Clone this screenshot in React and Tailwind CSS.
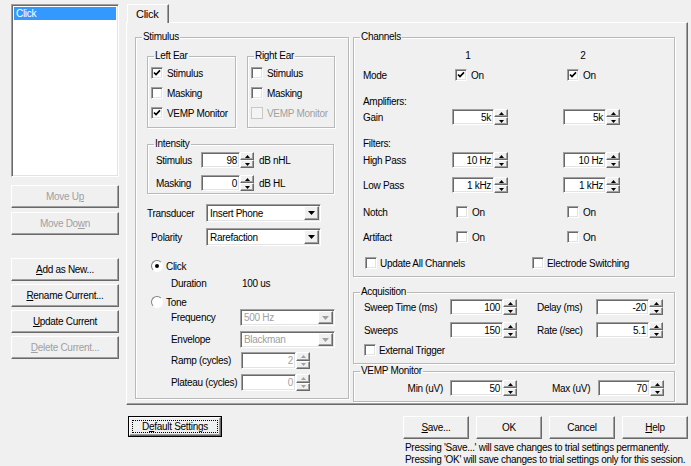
import React from "react";

// classic win32 bevels
const raised =
  "bg-[#f0f0f0] border border-t-white border-l-white border-r-[#696969] border-b-[#696969] shadow-[inset_-1px_-1px_0_#a0a0a0]";
const sunken =
  "border border-t-[#a0a0a0] border-l-[#a0a0a0] border-r-white border-b-white shadow-[inset_1px_1px_0_#696969,inset_-1px_-1px_0_#e3e3e3]";

const Btn = ({ children, className = "", disabled }) => (
  <button
    type="button"
    className={`flex items-center justify-center h-[23px] ${raised} ${
      disabled ? "text-[#a0a0a0]" : "text-black"
    } ${className}`}
  >
    {children}
  </button>
);

const Check = ({ checked, disabled }) => (
  <span
    className={`inline-flex shrink-0 items-center justify-center w-[12px] h-[12px] ${
      disabled
        ? "bg-[#f4f4f4] border border-[#c8c8c8]"
        : `bg-white ${sunken}`
    }`}
  >
    {checked && (
      <svg width="8" height="8" viewBox="0 0 8 8">
        <path d="M1 3.5L3 5.6L7 1.4" stroke="#000" strokeWidth="1.7" fill="none" />
      </svg>
    )}
  </span>
);

const Radio = ({ checked }) => (
  <span className="inline-flex shrink-0 items-center justify-center w-[12px] h-[12px] rounded-full bg-white border border-t-[#808080] border-l-[#808080] border-r-white border-b-white">
    {checked && <span className="w-[4px] h-[4px] rounded-full bg-black" />}
  </span>
);

const Arrow = ({ up, disabled }) => (
  <svg width="5" height="3" viewBox="0 0 5 3">
    <path d={up ? "M2.5 0L5 3H0z" : "M0 0H5L2.5 3z"} fill={disabled ? "#a0a0a0" : "#000"} />
  </svg>
);

const SpinBox = ({ value, w, disabled, className = "" }) => (
  <div className={`flex h-[16px] ${className}`}>
    <div
      className={`flex items-center justify-end pr-[2px] bg-white ${sunken} ${w} ${
        disabled ? "text-[#a0a0a0]" : "text-black"
      }`}
    >
      {value}
    </div>
    <div className="flex flex-col w-[14px] h-full">
      <div className={`flex-1 flex items-center justify-center ${raised}`}>
        <Arrow up disabled={disabled} />
      </div>
      <div className={`flex-1 flex items-center justify-center ${raised}`}>
        <Arrow disabled={disabled} />
      </div>
    </div>
  </div>
);

const Select = ({ value, className = "", disabled }) => (
  <div className={`flex items-center bg-white ${sunken} ${className}`}>
    <span className={`flex-1 pl-[3px] ${disabled ? "text-[#a0a0a0]" : "text-black"}`}>
      {value}
    </span>
    <div className={`w-[15px] h-[calc(100%-2px)] mr-[1px] flex items-center justify-center ${raised}`}>
      <svg width="7" height="4" viewBox="0 0 7 4">
        <path d="M0 0H7L3.5 4z" fill={disabled ? "#a0a0a0" : "#000"} />
      </svg>
    </div>
  </div>
);

const Group = ({ title, className = "", children }) => (
  <fieldset
    className={`border border-[#b9b9b9] shadow-[1px_1px_0_#fff,inset_1px_1px_0_#fff] ${className}`}
  >
    <legend className="ml-[6px] px-[1px] leading-[12px]">{title}</legend>
    {children}
  </fieldset>
);

const CheckRow = ({ label, checked, disabled }) => (
  <div className={`flex items-center h-[20px] gap-[4px] ${disabled ? "text-[#a0a0a0]" : ""}`}>
    <Check checked={checked} disabled={disabled} />
    <span>{label}</span>
  </div>
);

const ChanCheck = ({ checked, className }) => (
  <div className={`flex items-center gap-[4px] ${className}`}>
    <Check checked={checked} />
    <span>On</span>
  </div>
);

const App = () => {
  return (
    <div className="w-[691px] h-[466px] bg-[#f0f0f0] text-black text-[10px] tracking-[-0.3px] leading-[13px] whitespace-nowrap font-['Liberation_Sans',Arial,sans-serif] flex overflow-hidden select-none">
      {/* list + buttons */}
      <div className="flex flex-col w-[108px] ml-[11px] mt-[4px]">
        <div className={`h-[173px] bg-white ${sunken} p-[2px]`}>
          <div className="h-[13px] bg-[#3399ff] text-white pl-[2px] leading-[13px]">Click</div>
        </div>
        <Btn className="mt-[8px]" disabled>
          Move U<u>p</u>
        </Btn>
        <Btn className="mt-[4px]" disabled>
          Move Do<u>w</u>n
        </Btn>
        <Btn className="mt-[23px]">
          <u>A</u>dd as New...
        </Btn>
        <Btn className="mt-[3px]">
          <u>R</u>ename Current...
        </Btn>
        <Btn className="mt-[3px]">
          <u>U</u>pdate Current
        </Btn>
        <Btn className="mt-[3px]" disabled>
          <u>D</u>elete Current...
        </Btn>
      </div>

      {/* tab area */}
      <div className="flex flex-col w-[562px] ml-[7px] mt-[4px]">
        <div className="flex h-[18px]">
          <div className="relative z-10 ml-[1px] w-[42px] h-[19px] bg-[#f0f0f0] border-t border-l border-t-white border-l-white border-r border-r-[#696969] shadow-[inset_-1px_0_0_#a0a0a0] pl-[8px] pt-[3px] text-[11px]">
            Click
          </div>
        </div>
        <div className="flex items-start h-[383px] bg-[#f0f0f0] border border-t-white border-l-white border-r-[#696969] border-b-[#696969] shadow-[inset_-1px_-1px_0_#a0a0a0]">
          {/* Stimulus */}
          <Group title="Stimulus" className="ml-[8px] mt-[8px] w-[214px] h-[368px]">
            <div className="flex mt-[7px] ml-[11px] gap-[11px]">
              <Group title="Left Ear" className="w-[89px] h-[78px]">
                <div className="pt-[1px] pl-[3px]">
                  <CheckRow label="Stimulus" checked />
                  <CheckRow label="Masking" />
                  <CheckRow label="VEMP Monitor" checked />
                </div>
              </Group>
              <Group title="Right Ear" className="w-[88px] h-[78px]">
                <div className="pt-[1px] pl-[3px]">
                  <CheckRow label="Stimulus" />
                  <CheckRow label="Masking" />
                  <CheckRow label="VEMP Monitor" disabled />
                </div>
              </Group>
            </div>

            <Group title="Intensity" className="mt-[10px] ml-[11px] w-[187px] h-[56px]">
              <div className="flex items-center h-[18px] mt-[1px]">
                <span className="pl-[8px] w-[53px]">Stimulus</span>
                <SpinBox value="98" w="w-[39px]" />
                <span className="ml-[5px]">dB nHL</span>
              </div>
              <div className="flex items-center h-[18px] mt-[5px]">
                <span className="pl-[8px] w-[53px]">Masking</span>
                <SpinBox value="0" w="w-[39px]" />
                <span className="ml-[5px]">dB HL</span>
              </div>
            </Group>

            <div className="flex items-center h-[18px] mt-[10px]">
              <span className="ml-[11px] w-[59px]">Transducer</span>
              <Select value="Insert Phone" className="w-[115px] h-[18px]" />
            </div>
            <div className="flex items-center h-[18px] mt-[6px]">
              <span className="ml-[15px] w-[55px]">Polarity</span>
              <Select value="Rarefaction" className="w-[115px] h-[18px]" />
            </div>

            <div className="flex items-center h-[14px] mt-[13px] ml-[15px] gap-[3px]">
              <Radio checked />
              <span>Click</span>
            </div>
            <div className="flex items-center h-[14px] mt-[3px]">
              <span className="ml-[35px] w-[71px]">Duration</span>
              <span>100 us</span>
            </div>
            <div className="flex items-center h-[14px] mt-[5px] ml-[15px] gap-[3px]">
              <Radio />
              <span>Tone</span>
            </div>
            <div className="flex items-center h-[17px]">
              <span className="ml-[35px] w-[69px]">Frequency</span>
              <Select value="500 Hz" disabled className="w-[95px] h-[17px]" />
            </div>
            <div className="flex items-center h-[17px] mt-[5px]">
              <span className="ml-[35px] w-[69px]">Envelope</span>
              <Select value="Blackman" disabled className="w-[95px] h-[17px]" />
            </div>
            <div className="flex items-center h-[17px] mt-[4px]">
              <span className="ml-[35px] w-[70px]">Ramp (cycles)</span>
              <SpinBox value="2" w="w-[55px]" disabled className="h-[17px]" />
            </div>
            <div className="flex items-center h-[17px] mt-[5px]">
              <span className="ml-[35px] w-[70px]">Plateau (cycles)</span>
              <SpinBox value="0" w="w-[55px]" disabled className="h-[17px]" />
            </div>
          </Group>

          {/* right side */}
          <div className="flex flex-col ml-[4px] mt-[8px]">
            <Group title="Channels" className="w-[322px] h-[246px]">
              <div className="flex items-center h-[12px] mt-[6px]">
                <span className="w-[98px]" />
                <span className="w-[111px]">
                  <span className="inline-block w-[32px] text-center">1</span>
                </span>
                <span className="ml-[4px] w-[32px] text-center">2</span>
              </div>
              <div className="flex items-center h-[14px] mt-[7px]">
                <span className="w-[98px] pl-[9px]">Mode</span>
                <div className="w-[111px]">
                  <ChanCheck checked className="ml-[3px]" />
                </div>
                <ChanCheck checked className="ml-[4px]" />
              </div>
              <div className="flex items-center h-[12px] mt-[13px] pl-[9px]">Amplifiers:</div>
              <div className="flex items-center h-[16px] mt-[2px]">
                <span className="w-[98px] pl-[9px]">Gain</span>
                <div className="w-[111px]">
                  <SpinBox value="5k" w="w-[42px]" />
                </div>
                <SpinBox value="5k" w="w-[43px]" />
              </div>
              <div className="flex items-center h-[12px] mt-[12px] pl-[9px]">Filters:</div>
              <div className="flex items-center h-[16px] mt-[3px]">
                <span className="w-[98px] pl-[9px]">High Pass</span>
                <div className="w-[111px]">
                  <SpinBox value="10 Hz" w="w-[42px]" />
                </div>
                <SpinBox value="10 Hz" w="w-[43px]" />
              </div>
              <div className="flex items-center h-[16px] mt-[9px]">
                <span className="w-[98px] pl-[9px]">Low Pass</span>
                <div className="w-[111px]">
                  <SpinBox value="1 kHz" w="w-[42px]" />
                </div>
                <SpinBox value="1 kHz" w="w-[43px]" />
              </div>
              <div className="flex items-center h-[14px] mt-[12px]">
                <span className="w-[98px] pl-[9px]">Notch</span>
                <div className="w-[111px]">
                  <ChanCheck className="ml-[4px]" />
                </div>
                <ChanCheck className="ml-[4px]" />
              </div>
              <div className="flex items-center h-[14px] mt-[11px]">
                <span className="w-[98px] pl-[9px]">Artifact</span>
                <div className="w-[111px]">
                  <ChanCheck className="ml-[4px]" />
                </div>
                <ChanCheck className="ml-[4px]" />
              </div>
              <div className="flex items-center h-[14px] mt-[12px]">
                <div className="flex items-center w-[178px] pl-[11px] gap-[3px]">
                  <Check />
                  <span>Update All Channels</span>
                </div>
                <div className="flex items-center gap-[3px]">
                  <Check />
                  <span>Electrode Switching</span>
                </div>
              </div>
            </Group>

            <Group title="Acquisition" className="mt-[9px] w-[322px] h-[78px]">
              <div className="flex items-center h-[16px] mt-[1px]">
                <span className="w-[96px] pl-[10px]">Sweep Time (ms)</span>
                <SpinBox value="100" w="w-[53px]" />
                <span className="ml-[20px] w-[59px]">Delay (ms)</span>
                <SpinBox value="-20" w="w-[53px]" />
              </div>
              <div className="flex items-center h-[16px] mt-[7px]">
                <span className="w-[96px] pl-[10px]">Sweeps</span>
                <SpinBox value="150" w="w-[53px]" />
                <span className="ml-[20px] w-[59px]">Rate (/sec)</span>
                <SpinBox value="5.1" w="w-[53px]" />
              </div>
              <div className="flex items-center h-[14px] mt-[5px] ml-[10px] gap-[3px]">
                <Check />
                <span>External Trigger</span>
              </div>
            </Group>

            <Group title="VEMP Monitor" className="mt-[1px] w-[322px] h-[37px]">
              <div className="flex items-center h-[16px] mt-[3px]">
                <span className="w-[89px] text-right">Min (uV)</span>
                <SpinBox value="50" w="w-[53px]" className="ml-[7px]" />
                <span className="ml-[35px] w-[46px]">Max (uV)</span>
                <SpinBox value="70" w="w-[52px]" />
              </div>
            </Group>
          </div>
        </div>

        {/* bottom buttons */}
        <div className="flex items-start mt-[11px]">
          <div className="ml-[2px] w-[94px] h-[21px] border border-black">
            <div className={`h-full flex items-center justify-center ${raised} p-[2px]`}>
              <span className="w-full h-full flex items-center justify-center border border-dotted border-black">
                D<u>e</u>fault Settings
              </span>
            </div>
          </div>
          <div className="flex flex-col ml-[181px]">
            <div className="flex gap-[7px]">
              <Btn className="w-[66px] h-[21px]">
                <u>S</u>ave...
              </Btn>
              <Btn className="w-[66px] h-[21px]">OK</Btn>
              <Btn className="w-[66px] h-[21px]">Cancel</Btn>
              <Btn className="w-[66px] h-[21px]">
                <u>H</u>elp
              </Btn>
            </div>
            <div className="mt-[3px] ml-[2px] leading-[12px]">
              <p>Pressing 'Save...' will save changes to trial settings permanently.</p>
              <p>Pressing 'OK' will save changes to trial settings only for this session.</p>
            </div>
          </div>
        </div>
      </div>
    </div>
  );
};

export default App;
